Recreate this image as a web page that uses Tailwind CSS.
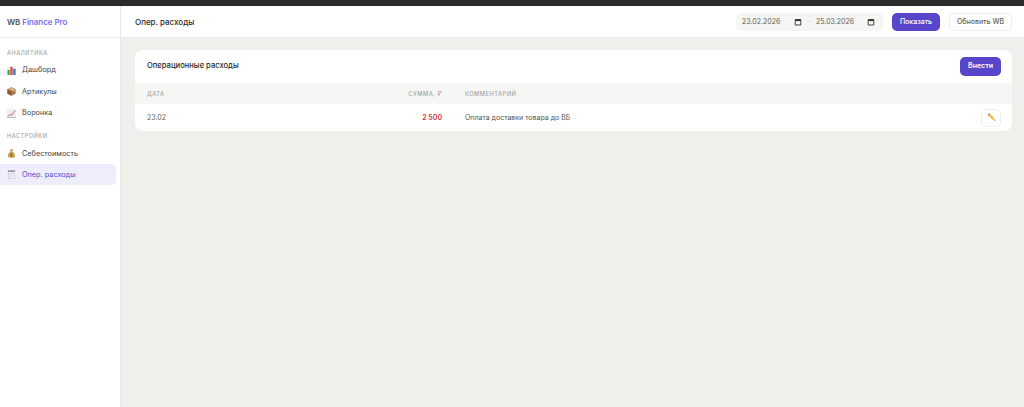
<!DOCTYPE html>
<html lang="ru">
<head>
  <meta charset="UTF-8" />
  <meta name="viewport" content="width=device-width, initial-scale=1.0"/>
  <title>WB Finance Pro</title>
  <script src="https://cdn.jsdelivr.net/npm/@tailwindcss/browser@4"></script>
</head>
<body class="h-[407px] overflow-hidden flex flex-col bg-[#f0efeb] font-['Inter','Liberation_Sans',sans-serif] text-[7px] text-[#454543]">
  <div class="h-[6px] shrink-0 bg-[#2b2b2b]"></div>
  <div class="flex flex-1 min-h-0">
    <!-- sidebar -->
    <aside class="w-[121px] shrink-0 bg-white border-r border-[#e9e8e4]">
      <div class="h-[32px] flex items-center pt-[3px] px-[7px] border-b border-[#efeeea] text-[7.9px] font-semibold text-[#55554f]">
        <span>WB&nbsp;<span class="text-[#7c6ce8]">Finance Pro</span></span>
      </div>
      <div class="h-[21px] pt-[12px] px-[7px] text-[5.6px] leading-[6px] font-medium tracking-[0.09em] text-[#a5a5a0]">АНАЛИТИКА</div>
      <nav class="pr-[4px] text-[7.3px]">
        <a class="h-[21.67px] flex items-center gap-[6px] pl-[7px] pt-[1px] rounded-r-[5px]">
          <svg class="w-[9px] h-[9px]" viewBox="0 0 9 9"><rect width="9" height="9" fill="#eef0f2"/><rect x="0.5" y="4" width="2.2" height="5" fill="#3f9b4b"/><rect x="3.4" y="1" width="2.2" height="8" fill="#d0453a"/><rect x="6.3" y="2.8" width="2.2" height="6.2" fill="#2f6fc4"/></svg>
          Дашборд
        </a>
        <a class="h-[21.67px] flex items-center gap-[6px] pl-[7px] pt-[1px] rounded-r-[5px]">
          <svg class="w-[9px] h-[9px]" viewBox="0 0 9 9"><path d="M4.5 0.3 8.6 2.3V6.8L4.5 8.8.4 6.8V2.3Z" fill="#a9794b"/><path d="M.4 2.3 4.5 4.3 8.6 2.3 4.5.3Z" fill="#c99a68"/><path d="M4.5 4.3V8.8L.4 6.8V2.3Z" fill="#8b5e36"/><path d="M2.2 1.4 6.4 3.4V4.6L7.2 4.2V3L3 1Z" fill="#e6d2b0"/></svg>
          Артикулы
        </a>
        <a class="h-[21.66px] flex items-center gap-[6px] pl-[7px] pt-[1px] rounded-r-[5px]">
          <svg class="w-[9px] h-[9px]" viewBox="0 0 9 9"><rect width="9" height="9" fill="#eeeef2"/><path d="M.8 7.6 3 5.4 4.6 6.2 8 1.6" fill="none" stroke="#c2526a" stroke-width="0.9"/><path d="M.5 8.4H8.5" stroke="#8d93a5" stroke-width="0.6"/></svg>
          Воронка
        </a>
      </nav>
      <div class="h-[19px] pt-[9px] px-[7px] text-[5.6px] leading-[6px] font-medium tracking-[0.09em] text-[#a5a5a0]">НАСТРОЙКИ</div>
      <nav class="pr-[4px] text-[7.3px]">
        <a class="h-[21px] flex items-center gap-[6px] pl-[7px] pt-[1px] rounded-r-[5px]">
          <svg class="w-[9px] h-[9px]" viewBox="0 0 9 9"><path d="M3 .4H6L5.4 2.2H3.6Z" fill="#b98a3c"/><path d="M3.5 2.4H5.5C7 3.6 8.2 5.4 8.2 6.8 8.2 8.2 7 8.8 4.5 8.8S.8 8.2.8 6.8C.8 5.4 2 3.6 3.5 2.4Z" fill="#c9a04e"/><rect x="3.9" y="4.4" width="1.2" height="3" fill="#6f5420"/></svg>
          Себестоимость
        </a>
        <a class="h-[21px] flex items-center gap-[6px] pl-[7px] pt-[1px] rounded-r-[5px] bg-[#eeedfc] text-[#5b4bd0]">
          <svg class="w-[9px] h-[9px]" viewBox="0 0 9 9"><rect x="1.2" y="1" width="6.6" height="7.8" fill="#f4f4f6" stroke="#b5b7bf" stroke-width="0.5"/><rect x="1.2" y=".4" width="6.6" height="1.5" fill="#8c8f99"/><path d="M2.6 3.6H6.4M2.6 5H6.4M2.6 6.4H5" stroke="#b9bcc6" stroke-width="0.5"/></svg>
          Опер. расходы
        </a>
      </nav>
    </aside>

    <div class="flex-1 min-w-0 flex flex-col">
      <!-- header -->
      <header class="h-[32px] shrink-0 bg-white border-b border-[#ecebe7] flex items-center pl-[14px] pr-[12px]">
        <h1 class="text-[8px] font-medium text-[#2a2a28]">Опер. расходы</h1>
        <div class="ml-auto flex items-center h-[18px] w-[147px] pl-[6px] pt-[1px] rounded-[5px] bg-[#f5f5f3] text-[#5f5f59]">
          <span class="w-[52px]">23.02.2026</span>
          <svg class="w-[8px] h-[8px] -mt-[1px]" viewBox="0 0 8 8"><path d="M1.2 1.6H6.8V7H1.2Z" fill="none" stroke="#333" stroke-width="0.9"/><rect x="1.2" y="1.4" width="5.6" height="1.7" fill="#333"/></svg>
          <span class="w-[14px] text-center text-[#d4d4cf]">–</span>
          <span class="w-[51px]">25.03.2026</span>
          <svg class="w-[8px] h-[8px] -mt-[1px]" viewBox="0 0 8 8"><path d="M1.2 1.6H6.8V7H1.2Z" fill="none" stroke="#333" stroke-width="0.9"/><rect x="1.2" y="1.4" width="5.6" height="1.7" fill="#333"/></svg>
        </div>
        <button class="ml-[9px] h-[18px] w-[48px] pt-[1px] rounded-[5px] bg-[#5746c9] text-white font-medium">Показать</button>
        <button class="ml-[9px] h-[18px] w-[63px] pt-[1px] rounded-[5px] bg-white border border-[#efeeea] font-medium text-[#5f5f59]">Обновить WB</button>
      </header>

      <!-- content -->
      <main class="p-[12px] pl-[14px] pr-[12px]">
        <section class="bg-white rounded-[8px] overflow-hidden">
          <div class="h-[33px] flex items-start justify-between pl-[12px] pr-[11px]">
            <h2 class="mt-[10px] text-[7.6px] font-medium text-[#2a2a28]">Операционные расходы</h2>
            <button class="mt-[7px] h-[19px] w-[41px] rounded-[5px] bg-[#5746c9] text-white font-semibold">Внести</button>
          </div>
          <table class="w-full border-collapse">
            <thead>
              <tr class="h-[21px] bg-[#f6f6f4] text-[5.7px] tracking-[0.09em] text-[#a5a5a0]">
                <th class="w-[250px] pl-[12px] pt-[2px] text-left font-medium">ДАТА</th>
                <th class="w-[57px] pt-[2px] text-right font-medium">СУММА, ₽</th>
                <th class="pl-[23px] pt-[2px] text-left font-medium">КОММЕНТАРИЙ</th>
                <th class="w-[40px]"></th>
              </tr>
            </thead>
            <tbody>
              <tr class="h-[27px]">
                <td class="pl-[12px] pt-[1px] text-[#5f5f59]">23.02</td>
                <td class="text-right pt-[1px] font-semibold text-[#cf3434]">2 500</td>
                <td class="pl-[23px] pt-[1px] text-[#55554f]">Оплата доставки товара до ВБ</td>
                <td>
                  <div class="w-[20px] h-[18px] ml-[9px] flex items-center justify-center rounded-[5px] border border-[#efeeea]">
                    <svg class="w-[9px] h-[9px]" viewBox="0 0 9 9"><path d="M1.4 2.8 3.2 1 7 4.8 5.2 6.6Z" fill="#f0c23f"/><path d="M.6 2 2.4.2 3.2 1 1.4 2.8Z" fill="#777"/><path d="M5.2 6.6 7 4.8 8.4 8Z" fill="#d8b98c"/><path d="M7.6 7.3 8.4 8 7.3 7.8Z" fill="#444"/></svg>
                  </div>
                </td>
              </tr>
            </tbody>
          </table>
        </section>
      </main>
    </div>
  </div>
</body>
</html>
